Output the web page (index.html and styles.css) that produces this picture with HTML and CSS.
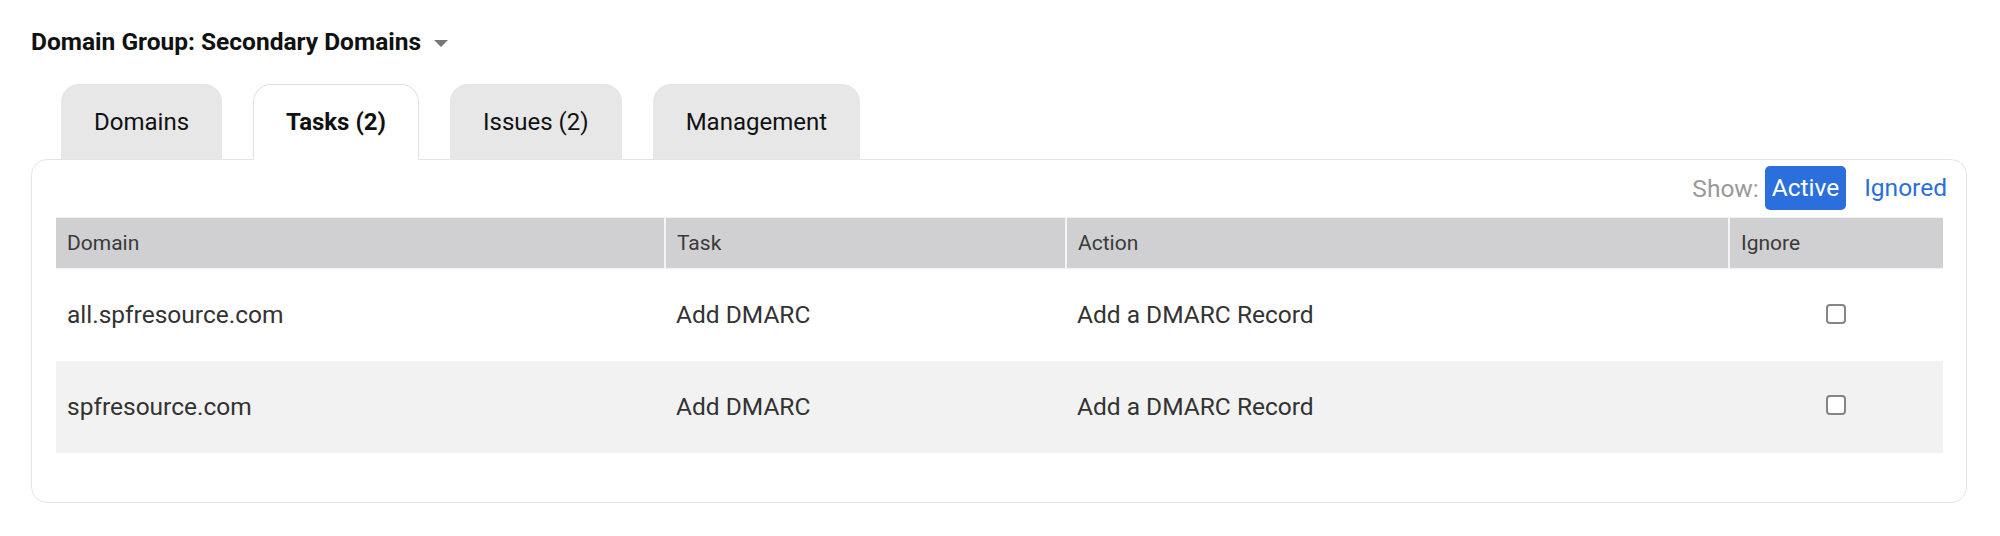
FILE: index.html
```html
<!DOCTYPE html>
<html>
<head>
<meta charset="utf-8">
<link rel="stylesheet" href="styles.css">
</head>
<body>
<div class="page">
  <div class="group-title">
    <span>Domain Group: Secondary Domains</span>
    <span class="caret"></span>
  </div>
  <div class="tabs">
    <div class="tab">Domains</div>
    <div class="tab active">Tasks (2)</div>
    <div class="tab">Issues (2)</div>
    <div class="tab">Management</div>
  </div>
  <div class="panel">
    <div class="show-bar">
      <span class="show-label">Show:</span>
      <span class="show-btn selected">Active</span>
      <span class="show-btn">Ignored</span>
    </div>
    <table class="tasks">
      <colgroup>
        <col class="c-domain"><col class="c-task"><col class="c-action"><col class="c-ignore">
      </colgroup>
      <thead>
        <tr><th>Domain</th><th>Task</th><th>Action</th><th>Ignore</th></tr>
      </thead>
      <tbody>
        <tr>
          <td>all.spfresource.com</td><td>Add DMARC</td><td>Add a DMARC Record</td>
          <td class="cb-cell"><input type="checkbox" class="cb"></td>
        </tr>
        <tr class="alt">
          <td>spfresource.com</td><td>Add DMARC</td><td>Add a DMARC Record</td>
          <td class="cb-cell"><input type="checkbox" class="cb"></td>
        </tr>
      </tbody>
    </table>
  </div>
</div>
</body>
</html>
```

FILE: styles.css
```css
* { box-sizing: border-box; }
html, body { margin: 0; padding: 0; background: #ffffff; }
body { font-family: Roboto, "Liberation Sans", Arial, sans-serif; color: #333333; }

.page { padding: 28px 33px 0 31px; }

.group-title {
  display: flex;
  align-items: center;
  gap: 13px;
  font-size: 24.5px;
  line-height: 28px;
  font-weight: 700;
  color: #111111;
}
.caret {
  width: 0; height: 0;
  border-left: 7px solid transparent;
  border-right: 7px solid transparent;
  border-top: 7px solid #777777;
  margin-top: 2px;
}

.tabs {
  display: flex;
  gap: 31px;
  margin: 28px 0 -1px 30px;
  position: relative;
  z-index: 1;
}
.tab {
  height: 76px;
  display: flex;
  align-items: center;
  justify-content: center;
  padding: 0 32px;
  font-size: 24px;
  color: #111111;
  background: #e7e7e7;
  border-radius: 18px 18px 0 0;
  border: 1px solid #e7e7e7;
  border-bottom: 1px solid #e4e4e4;
}
.tab.active {
  background: #ffffff;
  border-color: #e3e3e3;
  border-bottom-color: #ffffff;
  font-weight: 700;
}

.panel {
  border: 1px solid #e4e4e4;
  border-radius: 16px;
  padding: 6px 23px 49px 24px;
}

.show-bar {
  display: flex;
  justify-content: flex-end;
  align-items: center;
  height: 44px;
  margin: 0 -11px 7px 0;
  font-size: 24.5px;
}
.show-label { color: #999999; margin-right: 6px; }
.show-btn {
  color: #2a6fdb;
  padding: 0 7px;
  height: 44px;
  line-height: 44px;
  border-radius: 5px;
}
.show-btn.selected {
  background: #2a6fdb;
  color: #ffffff;
  margin-right: 11px;
}

.tasks {
  width: 100%;
  border-collapse: collapse;
  table-layout: fixed;
}
.c-domain { width: 609px; }
.c-task { width: 401px; }
.c-action { width: 663px; }
.c-ignore { width: 214px; }

.tasks th {
  background: #d0d0d2;
  height: 51px;
  text-align: left;
  font-weight: 400;
  font-size: 21px;
  color: #3a3a3a;
  padding: 0 11px;
  border-left: 2px solid #f4f4f4;
  border-top: 1px solid #f0f0f0;
  border-bottom: 1px solid #f0f0f0;
}
.tasks th:first-child { border-left: none; }
.tasks td {
  height: 92px;
  font-size: 24.5px;
  color: #333333;
  padding: 0 11px;
}
.tasks tr.alt td { background: #f2f2f2; }
.cb-cell { text-align: center; }
.cb {
  appearance: none;
  -webkit-appearance: none;
  width: 20px;
  height: 20px;
  margin: 0 0 6px 0;
  border: 2px solid #858585;
  border-radius: 4px;
  background: #ffffff;
  vertical-align: middle;
}
```
